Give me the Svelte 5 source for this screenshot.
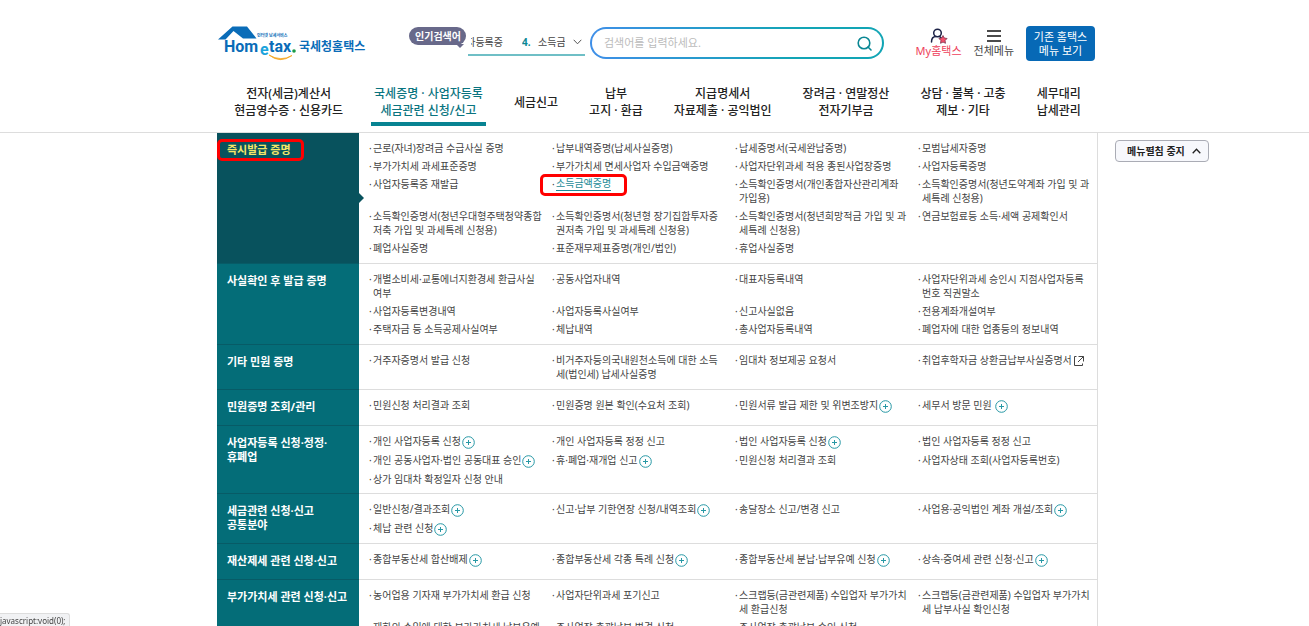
<script lang="ts">
  type MenuItem = { text: string; icon?: 'plus' | 'out'; active?: boolean };
  type MenuGroup = { title: string; current?: boolean; items: MenuItem[] };

  let keyword = $state('');
  let menuOpen = $state(true);

  const tabs = [
    ['전자(세금)계산서', '현금영수증 · 신용카드'],
    ['국세증명 · 사업자등록', '세금관련 신청/신고'],
    ['세금신고'],
    ['납부', '고지 · 환급'],
    ['지급명세서', '자료제출 · 공익법인'],
    ['장려금 · 연말정산', '전자기부금'],
    ['상담 · 불복 · 고충', '제보 · 기타'],
    ['세무대리', '납세관리'],
  ];
  const activeTab = 1;

  const groups: MenuGroup[] = [
    {
      title: '즉시발급 증명',
      current: true,
      items: [
        { text: '근로(자녀)장려금 수급사실 증명' },
        { text: '납부내역증명(납세사실증명)' },
        { text: '납세증명서(국세완납증명)' },
        { text: '모범납세자증명' },
        { text: '부가가치세 과세표준증명' },
        { text: '부가가치세 면세사업자 수입금액증명' },
        { text: '사업자단위과세 적용 종된사업장증명' },
        { text: '사업자등록증명' },
        { text: '사업자등록증 재발급' },
        { text: '소득금액증명', active: true },
        { text: '소득확인증명서(개인종합자산관리계좌\n가입용)' },
        { text: '소득확인증명서(청년도약계좌 가입 및 과\n세특례 신청용)' },
        { text: '소득확인증명서(청년우대형주택청약종합\n저축 가입 및 과세특례 신청용)' },
        { text: '소득확인증명서(청년형 장기집합투자증\n권저축 가입 및 과세특례 신청용)' },
        { text: '소득확인증명서(청년희망적금 가입 및 과\n세특례 신청용)' },
        { text: '연금보험료등 소득·세액 공제확인서' },
        { text: '폐업사실증명' },
        { text: '표준재무제표증명(개인/법인)' },
        { text: '휴업사실증명' },
      ],
    },
    {
      title: '사실확인 후 발급 증명',
      items: [
        { text: '개별소비세·교통에너지환경세 환급사실\n여부' },
        { text: '공동사업자내역' },
        { text: '대표자등록내역' },
        { text: '사업자단위과세 승인시 지점사업자등록\n번호 직권말소' },
        { text: '사업자등록변경내역' },
        { text: '사업자등록사실여부' },
        { text: '신고사실없음' },
        { text: '전용계좌개설여부' },
        { text: '주택자금 등 소득공제사실여부' },
        { text: '체납내역' },
        { text: '총사업자등록내역' },
        { text: '폐업자에 대한 업종등의 정보내역' },
      ],
    },
    {
      title: '기타 민원 증명',
      items: [
        { text: '거주자증명서 발급 신청' },
        { text: '비거주자등의국내원천소득에 대한 소득\n세(법인세) 납세사실증명' },
        { text: '임대차 정보제공 요청서' },
        { text: '취업후학자금 상환금납부사실증명서', icon: 'out' },
      ],
    },
    {
      title: '민원증명 조회/관리',
      items: [
        { text: '민원신청 처리결과 조회' },
        { text: '민원증명 원본 확인(수요처 조회)' },
        { text: '민원서류 발급 제한 및 위변조방지', icon: 'plus' },
        { text: '세무서 방문 민원 ', icon: 'plus' },
      ],
    },
    {
      title: '사업자등록 신청·정정·\n휴폐업',
      items: [
        { text: '개인 사업자등록 신청', icon: 'plus' },
        { text: '개인 사업자등록 정정 신고' },
        { text: '법인 사업자등록 신청', icon: 'plus' },
        { text: '법인 사업자등록 정정 신고' },
        { text: '개인 공동사업자·법인 공동대표 승인', icon: 'plus' },
        { text: '휴·폐업·재개업 신고', icon: 'plus' },
        { text: '민원신청 처리결과 조회' },
        { text: '사업자상태 조회(사업자등록번호)' },
        { text: '상가 임대차 확정일자 신청 안내' },
      ],
    },
    {
      title: '세금관련 신청·신고\n공통분야',
      items: [
        { text: '일반신청/결과조회', icon: 'plus' },
        { text: '신고·납부 기한연장 신청/내역조회', icon: 'plus' },
        { text: '송달장소 신고/변경 신고' },
        { text: '사업용·공익법인 계좌 개설/조회', icon: 'plus' },
        { text: '체납 관련 신청', icon: 'plus' },
      ],
    },
    {
      title: '재산제세 관련 신청·신고',
      items: [
        { text: '종합부동산세 합산배제', icon: 'plus' },
        { text: '종합부동산세 각종 특례 신청', icon: 'plus' },
        { text: '종합부동산세 분납·납부유예 신청', icon: 'plus' },
        { text: '상속·증여세 관련 신청·신고', icon: 'plus' },
      ],
    },
    {
      title: '부가가치세 관련 신청·신고',
      items: [
        { text: '농어업용 기자재 부가가치세 환급 신청' },
        { text: '사업자단위과세 포기신고' },
        { text: '스크랩등(금관련제품) 수입업자 부가가치\n세 환급신청' },
        { text: '스크랩등(금관련제품) 수입업자 부가가치\n세 납부사실 확인신청' },
        { text: '재화의 수입에 대한 부가가치세 납부유예' },
        { text: '주사업장 총괄납부 변경 신청' },
        { text: '주사업장 총괄납부 승인 신청' },
      ],
    },
  ];
</script>

<div class="page">
  <header class="header">
    <div class="top">
      <a class="logo" href="#home" aria-label="Hometax 국세청홈택스">
        <svg width="148" height="36" viewBox="0 0 148 36">
          <path d="M14.5 0.500H29L38.500 12.500H25L15.500 5L7.500 13.500H0Z" fill="#0a6cb8" />
          <text class="logo-en" x="6" y="26" fill="#0a6cb8">Hom</text>
          <text class="logo-en" x="42" y="29" fill="#1ba3dc">e</text>
          <text class="logo-en" x="51" y="26" fill="#0a6cb8">tax</text>
          <circle cx="76" cy="25" r="1.800" fill="#1a9b48" />
          <path d="M51 29Q62 38 74 29.500Q63 36 51 29Z" fill="#f5a623" stroke="#f5a623" stroke-width=".8" />
          <text class="logo-sub" x="39" y="11" fill="#0a6cb8">인터넷 납세서비스</text>
          <text class="logo-ko" x="81" y="25" fill="#0a6cb8">국세청홈택스</text>
        </svg>
      </a>

      <div class="popular">
        <strong class="badge">인기검색어</strong>
        <div class="ticker">
          <span class="cell first">자등록증</span>
          <span class="cell second"><b>4.</b>소득금액</span>
          <button class="ticker-more" aria-label="인기검색어 펼치기">
            <svg width="9" height="6" viewBox="0 0 9 6"><path d="M.7.8 4.500 4.800 8.300.8" fill="none" stroke="#555" /></svg>
          </button>
        </div>
      </div>

      <form class="search" onsubmit={(e) => e.preventDefault()}>
        <input type="text" aria-label="검색어" placeholder="검색어를 입력하세요." bind:value={keyword} />
        <button aria-label="검색">
          <svg width="15" height="15" viewBox="0 0 15 15" fill="none" stroke="#0a8794" stroke-width="1.600">
            <circle cx="7" cy="7" r="5.800" />
            <path d="m11 11 3 3" stroke-linecap="round" />
          </svg>
        </button>
      </form>

      <div class="util">
        <a class="my" href="#my">
          <svg width="18" height="16" viewBox="0 0 18 16">
            <circle cx="7.500" cy="5" r="3.800" fill="none" stroke="#1d2347" stroke-width="1.500" />
            <path d="M1.500 14C1.500 10.500 3.500 8.500 6 8.500M9 8.500q1.300.3 2 1.200" fill="none" stroke="#1d2347" stroke-width="1.500" stroke-linecap="round" />
            <path d="m13 7.500 1.300 2.500 2.800.5-2 2 .4 2.800-2.500-1.200-2.500 1.200.4-2.800-2-2 2.800-.5Z" fill="#f4516c" stroke="#6b2440" stroke-width=".7" />
          </svg>
          <span>My홈택스</span>
        </a>
        <a href="#all">
          <svg width="14" height="16" viewBox="0 0 14 16"><path d="M0 3h14M0 8h14M0 13h14" stroke="#111" stroke-width="1.500" /></svg>
          <span>전체메뉴</span>
        </a>
        <button class="old">기존 홈택스<br />메뉴 보기</button>
      </div>
    </div>

    <nav class="tabs">
      {#each tabs as lines, i}
        <a href="#tab{i}" class:on={i === activeTab}>
          {#each lines as line}<span>{line}</span>{/each}
        </a>
      {/each}
    </nav>
  </header>

  <main class="body">
    <div class="menu">
      {#if menuOpen}
        {#each groups as group}
          <section class="group" class:current={group.current}>
            <h2>
              {group.title}
              {#if group.current}<i class="mark"></i>{/if}
            </h2>
            <ul>
              {#each group.items as item}
                <li>
                  <a href="#menu" class:active={item.active}>{item.text}</a>
                  {#if item.icon === 'plus'}
                    <svg class="icon" width="13" height="13" viewBox="0 0 13 13" fill="none" stroke="#2798a5">
                      <circle cx="6.500" cy="6.500" r="5.800" />
                      <path d="M6.500 4v5M4 6.500h5" />
                    </svg>
                  {:else if item.icon === 'out'}
                    <svg class="icon" width="12" height="12" viewBox="0 0 12 12" fill="none" stroke="#444">
                      <path d="M3.500 1.500H1.500v9h8V8.500M5.500 1.500h5v5M10.500 1.500 5 7" />
                    </svg>
                  {/if}
                  {#if item.active}<i class="mark"></i>{/if}
                </li>
              {/each}
            </ul>
          </section>
        {/each}
      {/if}
    </div>
    <aside>
      <button class="fold" onclick={() => (menuOpen = !menuOpen)}>
        메뉴펼침 중지
        <svg width="9" height="6" viewBox="0 0 9 6"><path d="M.7 5.200 4.500 1.300 8.300 5.200" fill="none" stroke="#222" stroke-width="1.300" /></svg>
      </button>
    </aside>
  </main>

  <div class="status">javascript:void(0);</div>
</div>

<style>
  :global(body) {
    background: #fff;
  }

  .page {
    height: 100vh;
    overflow: hidden;
    font-family: 'Noto Sans', 'Noto Sans CJK KR', sans-serif;
    font-size: 10px;
    line-height: 14px;
    color: #444;
  }

  .page *,
  .page *::before,
  .page *::after {
    box-sizing: border-box;
  }

  a {
    color: inherit;
    text-decoration: none;
  }

  button,
  input {
    font: inherit;
    color: inherit;
    padding: 0;
    border: 0;
    background: none;
  }

  button {
    cursor: pointer;
  }

  svg {
    display: block;
    flex: none;
  }

  /* header */
  .header {
    display: flex;
    flex-direction: column;
    align-items: center;
    padding: 26px 0 0 6px;
    border-bottom: 1px solid #ddd;
  }

  .top {
    display: flex;
    align-items: flex-start;
    width: 881px;
    height: 58px;
    padding: 0 3px 0 1px;
  }

  .logo {
    margin-right: 43px;
  }

  .logo-en {
    font: bold 16px Roboto, sans-serif;
  }

  .logo-sub {
    font-size: 4px;
    font-weight: bold;
  }

  .logo-ko {
    font-size: 12px;
    font-weight: bold;
  }

  .popular {
    display: flex;
    gap: 2px;
  }

  .badge {
    position: relative;
    height: 18px;
    margin-top: 1px;
    padding: 0 5px 0 6px;
    border-radius: 9px;
    background: #68698a;
    color: #fff;
    line-height: 18px;
  }

  .badge::after {
    content: '';
    position: absolute;
    right: 2px;
    bottom: -3px;
    border: 4px solid transparent;
    border-top-color: #68698a;
    border-bottom: 0;
  }

  .ticker {
    display: flex;
    align-items: center;
    width: 117px;
    height: 30px;
    padding-top: 4px;
    border-bottom: 2px solid #6fbfc6;
  }

  .cell {
    display: flex;
    overflow: hidden;
    white-space: nowrap;
  }

  .first {
    width: 32px;
    margin-left: 3px;
    justify-content: flex-end;
  }

  .second {
    width: 43px;
    margin-left: 19px;
  }

  .second b {
    flex: none;
    width: 16px;
    color: #0a8794;
  }

  .ticker-more {
    margin-left: 8px;
  }

  .search {
    display: flex;
    flex: 1;
    align-items: center;
    height: 32px;
    margin: 1px 32px 0 5px;
    padding: 0 10px 0 12px;
    border: 2px solid transparent;
    border-radius: 16px;
    background:
      linear-gradient(#fff, #fff) padding-box,
      linear-gradient(90deg, #3f8fe8, #12a5b5 70%) border-box;
  }

  .search input {
    flex: 1;
    min-width: 0;
    font-size: 11px;
    outline: none;
  }

  .search input::placeholder {
    color: #bbb;
  }

  .util {
    display: flex;
    gap: 12px;
    font-size: 11px;
  }

  .util a {
    display: flex;
    flex-direction: column;
    align-items: center;
    padding-top: 2px;
  }

  .util .my {
    color: #ee3f5c;
  }

  .old {
    width: 69px;
    height: 35px;
    border-radius: 4px;
    background: #0769b6;
    color: #fff;
  }

  .tabs {
    display: flex;
    gap: 25px;
    font-size: 12px;
    font-weight: 500;
    line-height: 17px;
    color: #222;
  }

  .tabs a {
    display: flex;
    flex-direction: column;
    align-items: center;
    justify-content: center;
    height: 42px;
    margin-bottom: 6px;
    padding: 0 3px 2px;
    border-bottom: 4px solid transparent;
    white-space: nowrap;
  }

  .tabs .on {
    color: #0a7480;
    border-bottom-color: #078392;
  }

  /* full menu */
  .body {
    display: grid;
    grid-template-columns: 1fr 881px 1fr;
    padding-left: 6px;
  }

  .menu {
    grid-column: 2;
    border-right: 1px solid #ddd;
  }

  .group {
    display: grid;
    grid-template-columns: 142px 1fr;
  }

  h2 {
    position: relative;
    margin: 0;
    padding: 10px 0 11px 10px;
    border-bottom: 1px solid #075b66;
    background: #046d78;
    color: #fff;
    font-size: 11px;
    line-height: 14px;
    white-space: pre-line;
  }

  .current h2 {
    background: #08525d;
    color: #f4e668;
  }

  .current h2::after {
    content: '';
    position: absolute;
    left: 100%;
    top: 50%;
    margin-top: -5px;
    border: 5px solid transparent;
    border-left-color: #08525d;
    border-right: 0;
  }

  ul {
    display: grid;
    grid-template-columns: repeat(3, 183px) 1fr;
    align-content: start;
    gap: 4px 0;
    margin: 0;
    padding: 8px 0 8px 9px;
    border-bottom: 1px solid #ddd;
    list-style: none;
  }

  .group:nth-child(n + 4) ul {
    padding-bottom: 7px;
  }

  li {
    position: relative;
    display: flex;
    align-items: flex-start;
    white-space: pre;
  }

  li::before {
    content: '·';
    width: 5px;
    padding-left: 1px;
  }

  .active {
    border-bottom: 1px solid #1d8c98;
    color: #1d8c98;
    line-height: 13px;
  }

  .icon {
    margin: 2px 0 0 1px;
  }

  .mark {
    position: absolute;
    border: 3px solid #f00;
    border-radius: 5px;
    pointer-events: none;
  }

  h2 .mark {
    top: 6px;
    left: 0;
    width: 87px;
    height: 22px;
  }

  li .mark {
    top: -3px;
    left: -11px;
    width: 87px;
    height: 22px;
  }

  .fold {
    display: flex;
    align-items: center;
    gap: 7px;
    height: 22px;
    margin: 7px 0 0 17px;
    padding: 0 7px 0 11px;
    border: 1px solid #aaacb5;
    border-radius: 4px;
    background: #f7f8fc;
    color: #222;
    font-weight: bold;
    white-space: nowrap;
  }

  .status {
    position: fixed;
    left: 0;
    bottom: 0;
    height: 13px;
    padding-right: 3px;
    border: 1px solid #ddd;
    border-width: 1px 1px 0 0;
    border-radius: 0 3px 0 0;
    background: #f1f2f4;
    font: 8px/13px 'Noto Sans', sans-serif;
    color: #444;
  }
</style>
